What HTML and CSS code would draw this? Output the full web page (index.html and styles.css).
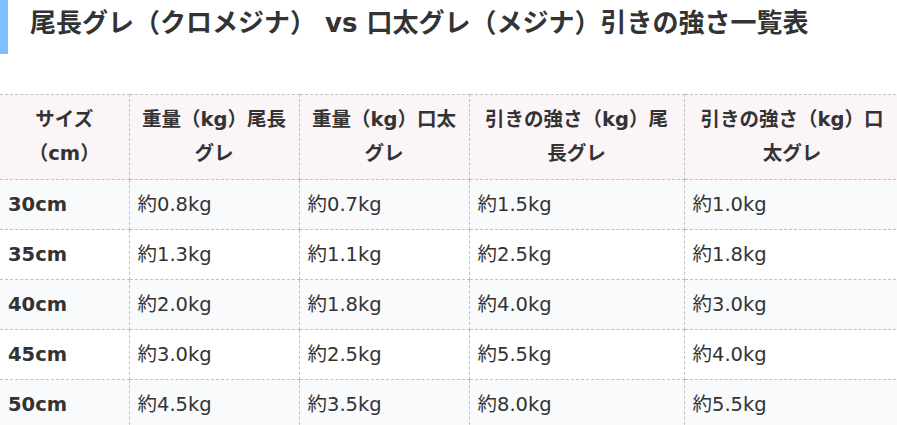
FILE: index.html
```html
<!DOCTYPE html>
<html lang="ja">
<head>
<meta charset="utf-8">
<title>尾長グレ vs 口太グレ 引きの強さ一覧表</title>
<link rel="stylesheet" href="styles.css">
</head>
<body>
<div class="page">
  <h2 class="title">尾長グレ（クロメジナ） vs 口太グレ（メジナ）引きの強さ一覧表</h2>
  <table class="grid">
    <colgroup>
      <col class="c1"><col class="c2"><col class="c3"><col class="c4"><col class="c5">
    </colgroup>
    <thead>
      <tr>
        <th>サイズ（cm）</th>
        <th>重量（kg）尾長グレ</th>
        <th>重量（kg）口太グレ</th>
        <th>引きの強さ（kg）尾長グレ</th>
        <th>引きの強さ（kg）口太グレ</th>
      </tr>
    </thead>
    <tbody>
      <tr><td class="size">30cm</td><td>約0.8kg</td><td>約0.7kg</td><td>約1.5kg</td><td>約1.0kg</td></tr>
      <tr><td class="size">35cm</td><td>約1.3kg</td><td>約1.1kg</td><td>約2.5kg</td><td>約1.8kg</td></tr>
      <tr><td class="size">40cm</td><td>約2.0kg</td><td>約1.8kg</td><td>約4.0kg</td><td>約3.0kg</td></tr>
      <tr><td class="size">45cm</td><td>約3.0kg</td><td>約2.5kg</td><td>約5.5kg</td><td>約4.0kg</td></tr>
      <tr><td class="size">50cm</td><td>約4.5kg</td><td>約3.5kg</td><td>約8.0kg</td><td>約5.5kg</td></tr>
    </tbody>
  </table>
</div>
</body>
</html>
```
FILE: styles.css
```css
html, body {
  margin: 0;
  padding: 0;
  background: #ffffff;
}
.page {
  width: 897px;
  height: 425px;
  overflow: hidden;
  font-family: "DejaVu Sans", "Noto Sans CJK JP", sans-serif;
  color: #333333;
  text-spacing-trim: space-all;
}
.title {
  margin: 0;
  height: 54px;
  border-left: 8px solid #7fbfff;
  padding-left: 22px;
  box-sizing: border-box;
  font-size: 26px;
  font-weight: bold;
  line-height: 46px;
  white-space: nowrap;
}
.grid {
  margin-top: 40px;
  width: 900px;
  table-layout: fixed;
  border-collapse: collapse;
  font-size: 19.5px;
}
.c1 { width: 129px; }
.c2 { width: 170px; }
.c3 { width: 170px; }
.c4 { width: 215px; }
.c5 { width: 216px; }
.grid th, .grid td {
  border: 1px dashed #c0c0c0;
  padding: 8px 8px;
  line-height: 33px;
}
.grid th:first-child, .grid td:first-child {
  border-left: none;
}
.grid th {
  background: #fcf5f7;
  font-weight: bold;
  text-align: center;
  vertical-align: middle;
  line-height: 34px;
}
.grid td {
  text-align: left;
}
.grid tbody tr:nth-child(odd) td {
  background: #f9fafc;
}
.grid td.size {
  font-weight: bold;
}
```
